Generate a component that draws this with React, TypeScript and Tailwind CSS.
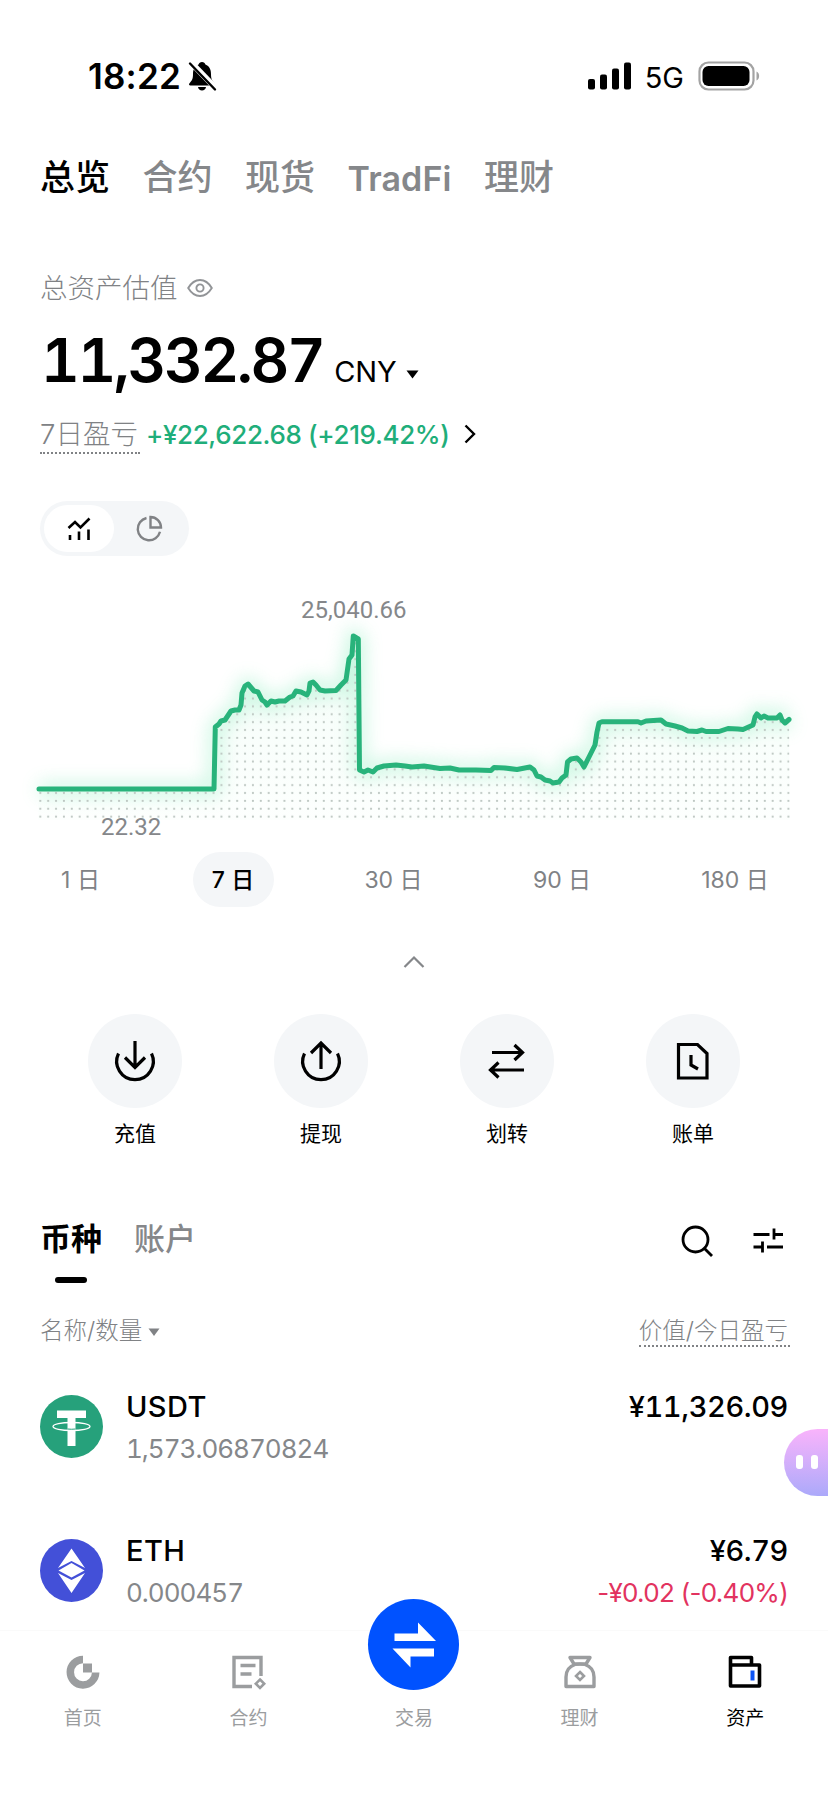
import { useState } from "react";
import type { ReactNode } from "react";

const TABS = ["总览", "合约", "现货", "TradFi", "理财"];

const RANGES = [
  { label: "1 日", width: "w-[81px]" },
  { label: "7 日", width: "w-[81px]" },
  { label: "30 日", width: "w-[97px]" },
  { label: "90 日", width: "w-[97px]" },
  { label: "180 日", width: "w-[106px]" },
];

// balance history, in chart pixels
const LINE =
  "39,209 214,209 215.3,147 219,144 221,141 225,140 231,131 235,130 239,130 241,125 242,113 245,106 248,104 254,111 258,112 262,120 265,122 267,125 271,121 275,122 279,121 285,121 290,117 293,116 296,111 301,112 307,115 309,111 310,103 313,102 316,105 320,110 325,111 336,110.5 341,105 346,100 348,86 349,79 352,75 353.3,56 358.3,59 359.5,190 364,192 368,190 373,192 377,188 384,186 396,185 405,186 412,187 424,186 440,188.5 450,188 459,190 476,190 491,190.5 494,187.5 505,188 517,189.5 530,187 534,190 537,196 541,197 545,200 550,201 553,203 559,202 562,198 566,195 567.5,182 571,179 577,178 581,182 584,187 589,177 595,165 597,152 599,143 602,141.7 638,141.7 641,143 646,141 661,140 666,144 675,146 682,148 688,151 697,151.5 702,150 706,151.5 719,151.5 728,148.5 738,149 743,149.5 753,145 755,137 757,134 761,138 764,136 768,138 777,138 780,135 782,140 785,143 789,139.5";

function StatusBar() {
  return (
    <div className="flex h-[152px] items-center pl-[88px] pr-[68px]">
      <span className="mt-[1px] text-[35px] font-semibold leading-none tracking-[0.2px]">18:22</span>
      <svg className="ml-[5px]" width="32" height="32" viewBox="0 0 32 32">
        <path d="M16 2c-1.800 0-3 1.200-3.400 2.500C8.500 6 7 9.500 7 14c0 5-1 6.500-3.500 9.300-.9 1-.5 2.200.9 2.200h23.200c1.400 0 1.800-1.200.9-2.200C26 20.500 25 19 25 14c0-4.500-1.500-8-5.600-9.500C19 3.200 17.800 2 16 2zM12 27h8c-.3 2.200-1.900 3.600-4 3.600S12.300 29.200 12 27z" />
        <path d="M4 1.500 31 29.500" stroke="#fff" strokeWidth="6" />
        <path d="M4 3.500 29 29.500" stroke="#000" strokeWidth="2.400" strokeLinecap="round" />
      </svg>
      <svg className="ml-auto" width="44" height="28" viewBox="0 0 44 28">
        <rect x="0" y="17" width="7" height="10.500" rx="2" />
        <rect x="12" y="12.500" width="7" height="15" rx="2" />
        <rect x="24" y="6.500" width="7" height="21" rx="2" />
        <rect x="36" y="0.500" width="7" height="27" rx="2" />
      </svg>
      <span className="ml-[13px] mt-[2px] text-[29px] leading-none">5G</span>
      <svg className="ml-[14px]" width="62" height="30" viewBox="0 0 62 30">
        <rect x="1.500" y="1.500" width="54" height="27" rx="9" fill="none" stroke="#a3a3a3" strokeWidth="2.200" />
        <rect x="4.500" y="5" width="47" height="20" rx="6" />
        <path d="M58.500 10.500c3.500 1.500 3.500 7.500 0 9z" fill="#a3a3a3" />
      </svg>
    </div>
  );
}

function BalanceChart() {
  return (
    <div className="relative h-[260px]">
      <svg width="828" height="260" viewBox="0 0 828 260">
        <defs>
          <pattern id="dots" x="36.400" y="4.400" width="7.875" height="7.875" patternUnits="userSpaceOnUse">
            <circle cx="3.900" cy="3.900" r="1.100" fill="#bcc6c1" />
          </pattern>
          <linearGradient id="fade" x1="0" y1="0" x2="0" y2="1">
            <stop offset="0" stopColor="#e6faf0" />
            <stop offset="1" stopColor="#fafffc" />
          </linearGradient>
          <filter id="glow" x="-10%" y="-30%" width="120%" height="170%">
            <feGaussianBlur stdDeviation="9" />
          </filter>
        </defs>
        <polygon points={`38,240 ${LINE} 790,240`} fill="url(#fade)" opacity="0.45" />
        <polyline points={LINE} fill="none" stroke="#6be8ab" strokeWidth="12" opacity="0.36" filter="url(#glow)" />
        <polygon points={`38,240 ${LINE} 790,240`} fill="url(#dots)" />
        <polyline points={LINE} fill="none" stroke="#28b37b" strokeWidth="5" strokeLinecap="round" strokeLinejoin="round" />
      </svg>
      <span className="absolute left-[301px] top-[18px] font-['Roboto',sans-serif] text-[24px] leading-none text-[#85878a]">25,040.66</span>
      <span className="absolute left-[101px] top-[235px] font-['Roboto',sans-serif] text-[24px] leading-none text-[#85878a]">22.32</span>
    </div>
  );
}

function Action({ label, children }: { label: string; children: ReactNode }) {
  return (
    <button className="flex w-[94px] flex-col items-center">
      <span className="flex size-[94px] items-center justify-center rounded-full bg-[#f4f6f8]">
        <svg width="48" height="48" viewBox="0 0 48 48" fill="none" stroke="#000" strokeWidth="3.200">
          {children}
        </svg>
      </span>
      <span className="mt-[15px] text-[21px] leading-[22px]">{label}</span>
    </button>
  );
}

function UsdtIcon() {
  return (
    <svg width="63" height="63" viewBox="0 0 63 63">
      <circle cx="31.500" cy="31.500" r="31.500" fill="#26a17b" />
      <path d="M17 15.500h29v7.500h-10.500v28h-8V23H17z" fill="#fff" />
      <ellipse cx="31.500" cy="31.500" rx="18.500" ry="4" fill="none" stroke="#fff" strokeWidth="1.300" />
      <path d="M27.500 34q4 .5 8 0" fill="none" stroke="#26a17b" strokeWidth="1" />
    </svg>
  );
}

function EthIcon() {
  return (
    <svg width="63" height="63" viewBox="0 0 63 63">
      <circle cx="31.500" cy="31.500" r="31.500" fill="#4350d8" />
      <g fill="#fff">
        <path d="M31.500 9.500 45 29 31.500 22 18 29z" />
        <path d="M31.500 24 44.500 31.500 31.500 38.500 18.500 31.500z" />
        <path d="M18 34 31.500 41 45 34 31.500 54z" />
      </g>
    </svg>
  );
}

function AssetRow({ icon, name, amount, value, change }: {
  icon: ReactNode;
  name: string;
  amount: string;
  value: string;
  change?: string;
}) {
  return (
    <div className="flex h-[144px] items-start pl-10 pr-10">
      <div className="mt-[3px]">{icon}</div>
      <div className="ml-[23px] flex flex-col gap-[14px]">
        <span className="text-[29px] font-medium leading-[29px] tracking-[0.4px]">{name}</span>
        <span className="text-[26px] leading-[28px] tracking-[-1px] text-[#85878a] tabular-nums">{amount}</span>
      </div>
      <div className="ml-auto flex flex-col items-end gap-[14px]">
        <span className="text-[29px] font-medium leading-[29px] tracking-[-0.4px] tabular-nums">{value}</span>
        {change && <span className="text-[26px] leading-[28px] tracking-[-0.7px] text-[#e2335f]">{change}</span>}
      </div>
    </div>
  );
}

function NavItem({ label, active, children }: { label: string; active?: boolean; children?: ReactNode }) {
  return (
    <button className={`flex flex-1 flex-col items-center ${active ? "text-black" : "text-[#9b9d9f]"}`}>
      <svg width="40" height="40" viewBox="0 0 40 40" fill="none" stroke="currentColor" strokeWidth="3.400">
        {children}
      </svg>
      <span className="mt-[17px] text-[19px] leading-[20px]">{label}</span>
    </button>
  );
}

export default function App() {
  const [tab, setTab] = useState("总览");
  const [range, setRange] = useState("7 日");

  return (
    <div className="relative flex h-[1798px] w-[828px] flex-col overflow-hidden bg-white font-['Inter','Noto_Sans_CJK_SC',sans-serif] text-black">
      <StatusBar />

      <div className="flex h-[50px] items-center gap-[32.500px] pl-10 text-[35px] leading-none">
        {TABS.map((t) => (
          <button
            key={t}
            onClick={() => setTab(t)}
            className={`${t === "TradFi" ? "pt-[4px] text-[34px] font-semibold tracking-[0.1px]" : "font-medium"} ${t === tab ? "text-black" : "text-[#85878a]"}`}
          >
            {t}
          </button>
        ))}
      </div>

      <div className="mt-[61px] flex h-[50px] items-center pl-10">
        <span className="mt-[2px] text-[27.500px] font-light leading-none text-[#808285]">总资产估值</span>
        <svg className="ml-[9px]" width="26" height="20" viewBox="0 0 26 20" fill="none" stroke="#929497" strokeWidth="1.900">
          <path d="M1.200 10C4.500 4.500 8.500 2 13 2s8.500 2.500 11.800 8C21.500 15.500 17.500 18 13 18S4.500 15.500 1.200 10z" />
          <circle cx="13" cy="10" r="3.600" />
        </svg>
      </div>

      <div className="mt-[9px] flex h-[76px] items-baseline pl-[41px]">
        <span className="text-[60px] font-semibold leading-[76px] tracking-[-2.400px] tabular-nums">11,332.87</span>
        <span className="ml-[11px] text-[29px] leading-none tracking-[-0.2px]">CNY</span>
        <svg className="ml-[10px] -translate-y-[3px] self-baseline" width="13" height="9" viewBox="0 0 13 9">
          <path d="M.5.500h12L6.500 8.500z" />
        </svg>
      </div>

      <div className="mt-[12px] flex h-[48px] items-center pl-10">
        <span className="mt-[4px] border-b-2 border-dotted border-[#808285] pb-[1px] pr-[2px] text-[27.500px] font-light leading-[33px] text-[#808285]">7日盈亏</span>
        <span className="ml-[6px] mt-[1px] text-[26px] font-medium leading-none tracking-[-0.350px] text-[#1fae7a]">+¥22,622.68 (+219.42%)</span>
        <svg className="ml-[13px]" width="14" height="20" viewBox="0 0 14 20" fill="none" stroke="#000" strokeWidth="2.400">
          <path d="M2.500 1.500 11 10l-8.500 8.500" />
        </svg>
      </div>

      <div className="ml-10 mt-[43px] flex h-[55px] w-[149px] items-center rounded-full bg-[#f4f6f8] px-[4px]">
        <button className="flex h-[47px] w-[70px] items-center justify-center rounded-full bg-white">
          <svg width="24" height="24" viewBox="0 0 24 24" fill="none" stroke="#000" strokeWidth="2.600">
            <path d="M1.500 11 8 5l5.500 5.500L22.500 1.500M3 18v5M12 14.500V23M21.500 12.500V23" />
          </svg>
        </button>
        <button className="flex h-[47px] w-[70px] items-center justify-center">
          <svg width="28" height="28" viewBox="0 0 28 28" fill="none" stroke="#808285" strokeWidth="2.400">
            <path d="M11.500 3A11.300 11.300 0 1 0 25 16.800" />
            <path d="M15.500 2v10.500H26A10.500 10.500 0 0 0 15.500 2z" />
          </svg>
        </button>
      </div>

      <div className="mt-[24px]">
        <BalanceChart />
      </div>

      <div className="mt-[12px] flex h-[55px] items-center justify-between pl-[40px] pr-[40px]">
        {RANGES.map((r) => (
          <button
            key={r.label}
            onClick={() => setRange(r.label)}
            className={`h-[55px] rounded-full pt-px text-[23px] leading-none ${r.width} ${r.label === range ? "bg-[#f4f6f8] font-medium text-black" : "text-[#808285]"}`}
          >
            {r.label}
          </button>
        ))}
      </div>

      <div className="flex h-[107px] items-center justify-center pt-[2px]">
        <svg width="22" height="14" viewBox="0 0 22 14" fill="none" stroke="#85878a" strokeWidth="2.200">
          <path d="M1.500 12 11 2.500 20.500 12" />
        </svg>
      </div>

      <div className="flex justify-between pl-[88px] pr-[88px]">
        <Action label="充值">
          <path d="M7.500 16.500A18.300 18.300 0 1 0 40.500 16.500M24 4v26M14 20.500l10 10 10-10" />
        </Action>
        <Action label="提现">
          <path d="M7.500 16.500A18.300 18.300 0 1 0 40.500 16.500M24 32V6M14 16l10-10 10 10" />
        </Action>
        <Action label="划转">
          <path d="M9 15.500h31M31.500 8l8 7.500-8 7.500M41 33H8M15.500 25.500l-8 7.500 8 7.500" />
        </Action>
        <Action label="账单">
          <path d="M9.500 7.500h19l9.500 9V41H9.500zM22 18v10l7 4" />
        </Action>
      </div>

      <div className="mt-[69px] flex h-[50px] items-center pl-10 pr-[44px]">
        <div className="relative -mt-[2px] text-[31px] font-bold leading-none">
          币种
          <span className="absolute left-[15px] top-[54px] h-[6px] w-[32px] rounded-full bg-black" />
        </div>
        <span className="-mt-[2px] ml-[32px] text-[31px] font-medium leading-none text-[#85878a]">账户</span>
        <svg className="ml-auto mt-[3px]" width="32" height="32" viewBox="0 0 32 32" fill="none" stroke="#000" strokeWidth="2.800">
          <circle cx="14.500" cy="14.500" r="12.500" />
          <path d="m23.500 23.500 7.500 7.500" />
        </svg>
        <svg className="ml-[39px] mt-[2px]" width="32" height="26" viewBox="0 0 32 26" fill="none" stroke="#000" strokeWidth="2.800">
          <path d="M1.500 7.500h16M22 1.500v11M22 7.500h9M1.500 20h9M10.500 14.500v11M15 20h16" />
        </svg>
      </div>

      <div className="mt-[50px] flex h-[34px] items-center justify-between pl-10 pr-[38px] text-[23.500px] font-light leading-[28px] text-[#808285]">
        <span className="flex items-center">
          名称/数量
          <svg className="ml-[6px] mt-[2px]" width="12" height="9" viewBox="0 0 12 9" fill="#808285">
            <path d="M.5.500h11L6 8z" />
          </svg>
        </span>
        <span className="mt-[2px] border-b-2 border-dotted border-[#808285] pr-[2px]">价值/今日盈亏</span>
      </div>

      <div className="mt-[44px]">
        <AssetRow icon={<UsdtIcon />} name="USDT" amount="1,573.06870824" value="¥11,326.09" />
        <AssetRow icon={<EthIcon />} name="ETH" amount="0.000457" value="¥6.79" change="-¥0.02 (-0.40%)" />
      </div>

      {/* assistant bubble docked to the screen edge */}
      <div className="absolute left-[784px] top-[1429px] flex h-[67px] w-[80px] gap-[8px] rounded-l-full bg-linear-to-b from-[#f9b3fb] to-[#aba9fa] pl-[12px] pt-[26px]">
        <span className="h-[14px] w-[7px] rounded-[3px] bg-white" />
        <span className="h-[14px] w-[7px] rounded-[3px] bg-white" />
      </div>

      <div className="absolute bottom-0 left-0 flex h-[168px] w-full border-t border-[#fafafa] bg-white pt-[21px]">
        <NavItem label="首页">
          <path d="M20 7.500A12.700 12.700 0 1 0 32.700 20.500" strokeWidth="7.500" />
          <path d="M20 11.500h9v9h-9z" fill="currentColor" stroke="none" />
        </NavItem>
        <NavItem label="合约">
          <path d="M24 34.500H6V5.500h27V24M12.500 13.500h15M12.500 22h11" />
          <path d="m32 27.500 4.200 4.200-4.200 4.200-4.200-4.200z" strokeWidth="2.600" />
        </NavItem>
        <NavItem label="交易" />
        <NavItem label="理财">
          <path d="M10 5.500h20l-4 6.500H14zM15 12.500C9 14.500 6 19 6 25v9.500h28V25C34 19 31 14.500 25 12.500" strokeLinejoin="round" />
          <path d="M15 12.500q5-1 10 0" strokeWidth="3" />
          <path d="m20 20 4 4-4 4-4-4z" strokeWidth="2.600" />
        </NavItem>
        <NavItem label="资产" active>
          <path d="M5.500 13V5.500h21V13M5.500 13h29v21h-29z" strokeWidth="3.600" strokeLinejoin="round" />
          <path d="M27.500 18.500v10" stroke="#0b53f5" strokeWidth="4" />
        </NavItem>
        <button className="absolute left-[368px] top-[-32px] flex size-[91px] items-center justify-center rounded-full bg-[#0052ff]">
          <svg width="46" height="46" viewBox="0 0 46 46" fill="#fff">
            <path d="M3.500 11.500H27V.500L45 19H3.500zM43 26.500v8H19.500v11L1.500 26.500z" />
          </svg>
        </button>
      </div>
    </div>
  );
}
